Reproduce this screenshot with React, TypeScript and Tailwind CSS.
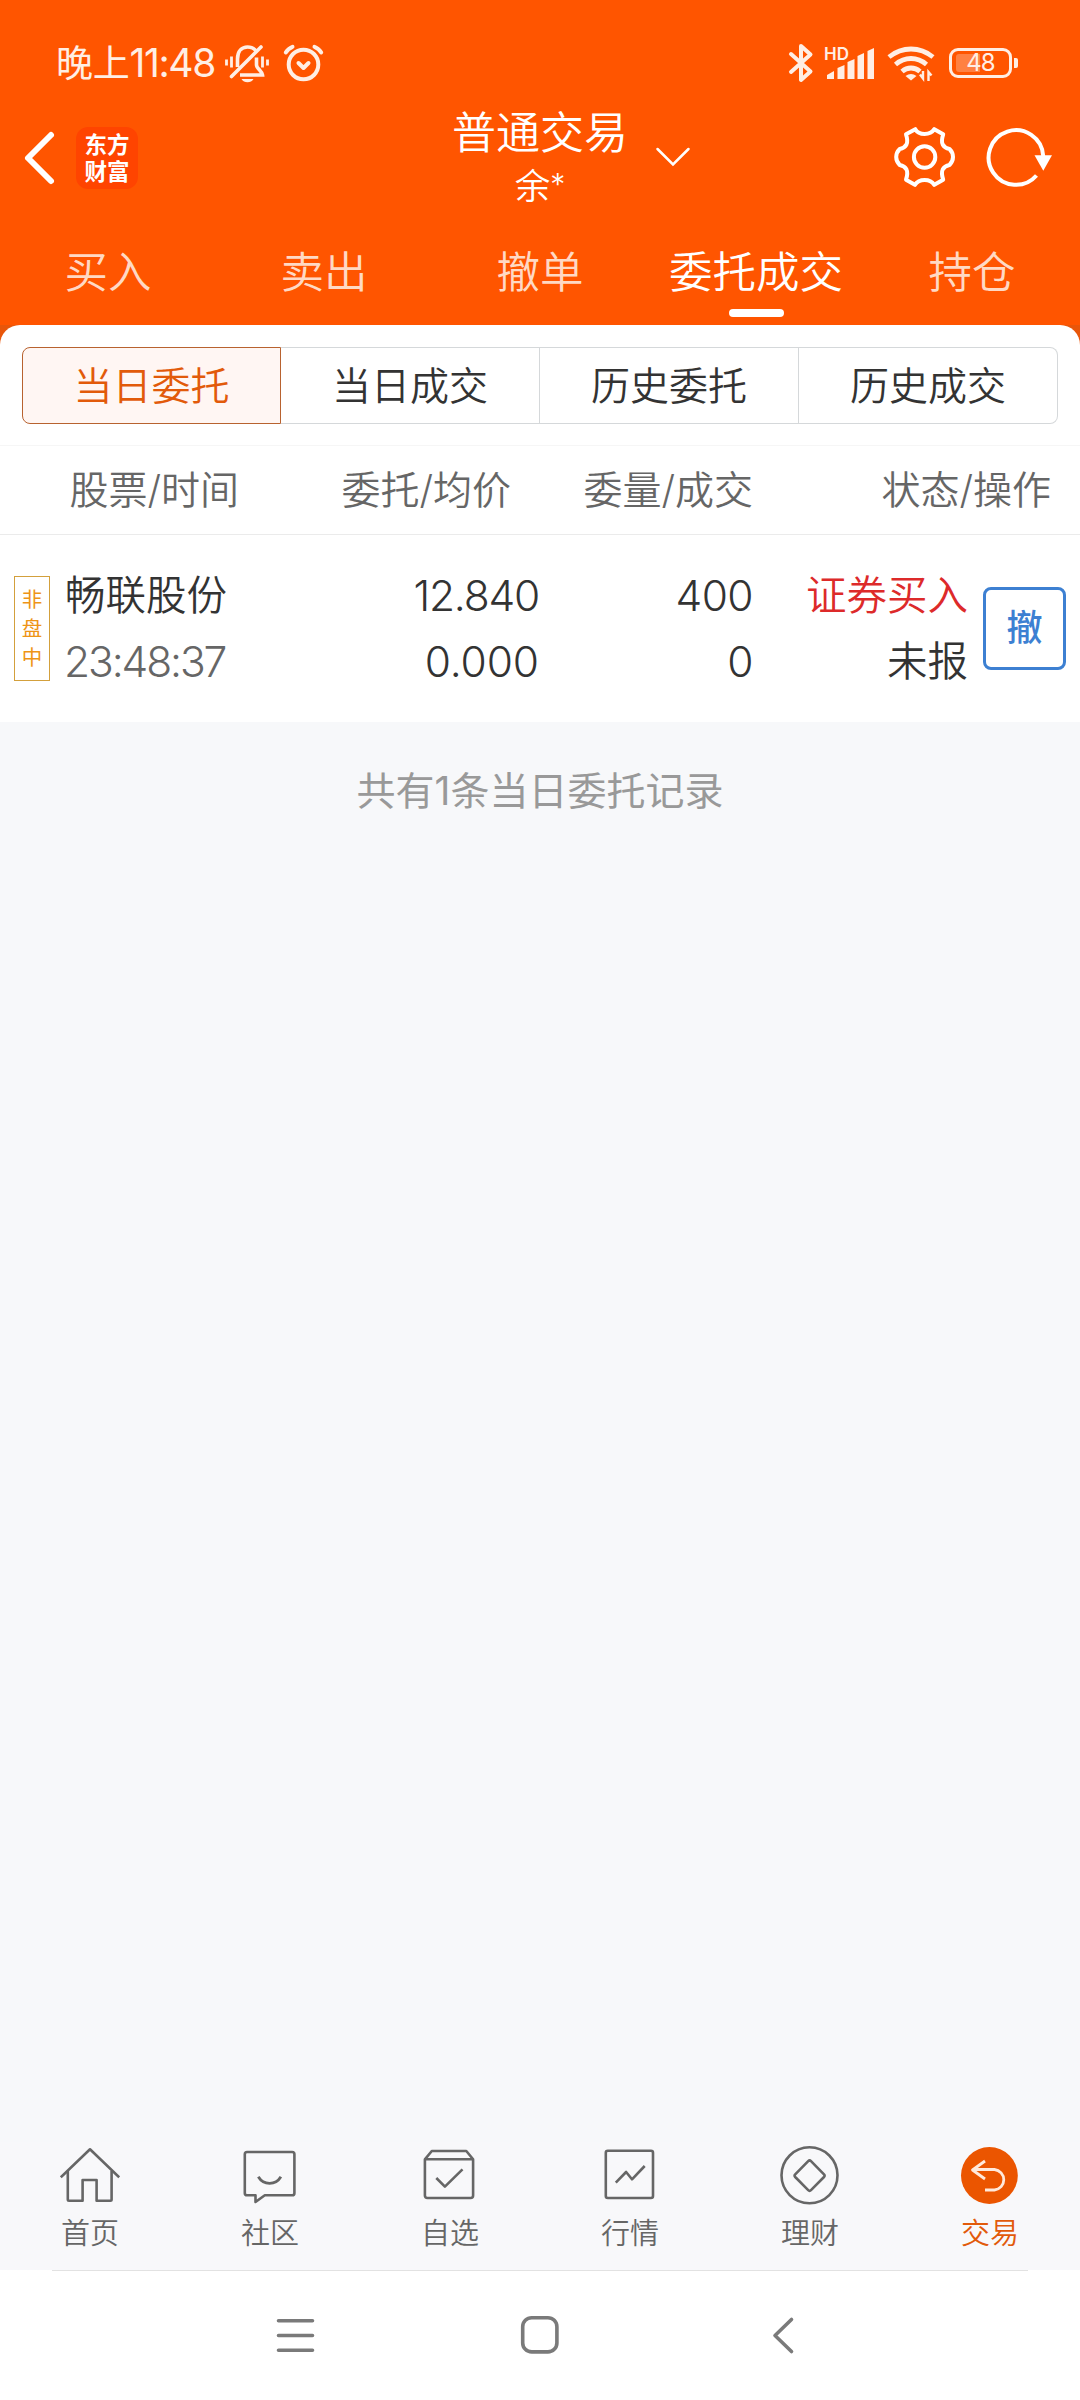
import React from 'react';

const tabs = ['买入', '卖出', '撤单', '委托成交', '持仓'];
const segments = ['当日委托', '当日成交', '历史委托', '历史成交'];

const StatusBar: React.FC = () => (
  <div className="flex h-[106px] pt-[42px] pl-[56px] text-[#ffeee4]">
    <span className="w-[169px] whitespace-nowrap text-[37px] leading-[42px] tracking-[-0.2px]">
      晚上<span className="text-[39px] tracking-[-1.4px]">11:48</span>
    </span>
    <svg className="h-[42px] w-[44px]" viewBox="0 0 44 42" fill="none" stroke="currentColor" strokeWidth="3.600">
      <path d="M6.5 34.5 36 5" strokeLinecap="round" />
      <path d="M12.5 25V17C12.5 9 17 5 22.5 5c4 0 6.500 1.200 8.500 4" />
      <path d="M31.500 15.500v7.500c0 3.500 5.500 6 6 10H15" />
      <path d="M1.500 17.500v6M6.500 14.500v11M37.500 14.500v11M42.500 17.500v6" strokeWidth="2.800" />
      <path d="M16.500 37h12q-2 3.300-6 3.300t-6-3.300z" fill="currentColor" stroke="none" />
    </svg>
    <svg className="ml-[14px] h-[42px] w-[42px]" viewBox="0 0 42 42" fill="none" stroke="currentColor" strokeWidth="4" strokeLinecap="round">
      <circle cx="20.500" cy="22.500" r="14.800" />
      <path d="M2.800 10.500Q5 6.500 9.500 4.800M38.200 10.500Q36 6.500 31.500 4.800" />
      <path d="m15.500 21 5 5 5-5" strokeLinejoin="round" />
    </svg>
    <svg className="ml-[463px] h-[42px] w-[26px]" viewBox="0 0 26 42" fill="none" stroke="currentColor" strokeWidth="4" strokeLinejoin="round" strokeLinecap="round">
      <path d="m3 12 19.500 17.500L13 38V4l9.500 8.500L3 30" />
    </svg>
    <div className="relative ml-[10px] h-[42px] w-[52px]">
      <span className="absolute top-[3px] left-0 text-[17px] leading-[18px] font-semibold">HD</span>
      <svg className="h-[42px] w-[52px]" viewBox="0 0 52 42" fill="currentColor">
        <path d="M3 37v-4l7-4v8zM13.500 37V26l7-3v14zM23.500 37V20l7-3v20zM33.500 37V14l6.500-3v26zM43.500 37V9l6.500-3v31z" />
      </svg>
    </div>
    <svg className="ml-[11px] h-[42px] w-[50px]" viewBox="0 0 50 42" fill="none" stroke="currentColor" strokeWidth="4.800">
      <path d="M2 15Q12 7 24 7t22 8" />
      <path d="M8.500 22.500Q15.500 16.500 24 16.500t15.500 6" />
      <path d="M15 29.500Q19 26 24 26t9 3.500" />
      <path d="M18.500 34q5.500-4 11 0L24 38.500z" fill="currentColor" stroke="none" />
      <path d="M33 32.500l3 4V29M44.500 33.500l-3-3.500v9" strokeWidth="2.400" />
    </svg>
    <div className="mt-[6px] ml-[12px] flex items-center self-start">
      <div className="relative flex h-[30px] w-[63px] items-center justify-center rounded-[9px] border-[3px] border-[#ffeee4]">
        <div className="absolute top-[3px] left-[4px] h-[18px] w-[24px] rounded-l-[3px] bg-[#ff8142]" />
        <span className="relative text-[24px] leading-[24px] tracking-[-1px]">48</span>
      </div>
      <div className="ml-[2px] h-[10px] w-[4px] rounded-r-[2px] bg-[#ffeee4]" />
    </div>
  </div>
);

const TitleBar: React.FC = () => (
  <div className="flex h-[108px] text-white">
    <div className="flex w-[440px] items-center pb-[4px] pl-[21px]">
      <svg className="h-[58px] w-[36px]" viewBox="0 0 36 58" fill="none" stroke="currentColor" strokeWidth="6" strokeLinecap="round" strokeLinejoin="round">
        <path d="M30 6 7 29l23 23" />
      </svg>
      <div className="ml-[19px] flex h-[62px] w-[62px] flex-col items-center justify-center rounded-[12px] bg-[#ff4400] pb-px text-[22.5px] leading-[27px] font-bold">
        <span>东方</span>
        <span>财富</span>
      </div>
    </div>
    <div className="flex w-[200px] flex-col items-center leading-[54px] font-[350]">
      <span className="text-[44px]">普通交易</span>
      <span className="text-[35.5px]">
        余<span className="align-[4px] text-[30px] leading-none">*</span>
      </span>
    </div>
    <div className="flex flex-1 items-center pb-[4px]">
      <svg className="ml-[14px] h-[22px] w-[38px]" viewBox="0 0 38 22" fill="none" stroke="currentColor" strokeWidth="2.500" strokeLinecap="round">
        <path d="m3.500 2 15.500 15.500L34.500 2" />
      </svg>
      <svg className="ml-[198px] h-[68px] w-[70px]" viewBox="0 0 70 68" fill="none" stroke="currentColor" strokeWidth="4" strokeLinejoin="round">
        <path d="M25.300 5.200Q28 10 34.600 10T44.300 5.200L53.200 10.300Q51 17 52.700 20.500 54.500 24 59.500 25 63 28.500 63 33T59.500 41Q54.500 42 52.700 45.500 51 49 53.200 55.700L44.300 60.800Q41.200 56 34.600 56T24.900 60.800L16 55.700Q18.200 49 16.500 45.500 14.700 42 9.700 41 6.200 37.500 6.200 33T9.700 25Q14.700 24 16.500 20.500 18.200 17 16 10.300Z" />
        <circle cx="34.600" cy="33" r="10.700" />
      </svg>
      <svg className="ml-[24px] h-[68px] w-[72px]" viewBox="0 0 72 68" fill="none" stroke="currentColor" strokeWidth="4">
        <path d="M52.500 51.500A27.300 27.300 0 1 1 59.200 32" />
        <path d="M50.500 31.300h17.500l-8.700 15.400z" fill="currentColor" stroke="none" />
      </svg>
    </div>
  </div>
);

const TradeTabs: React.FC = () => (
  <div className="grid h-[111px] grid-cols-5 text-[43.5px] leading-[54px] font-[350]">
    {tabs.map((tab) => {
      const active = tab === '委托成交';
      return (
        <div key={tab} className={`flex flex-col items-center pt-[31px] ${active ? 'text-white' : 'text-[#ffd9c4]'}`}>
          <span>{tab}</span>
          {active && <div className="mt-[10px] h-[8px] w-[55px] rounded-full bg-white" />}
        </div>
      );
    })}
  </div>
);

const Segments: React.FC = () => (
  <div className="mx-[22px] grid h-[77px] grid-cols-4 text-[39px] leading-[75px] font-[350] text-[#333]">
    {segments.map((label, i) => (
      <div
        key={label}
        className={
          i === 0
            ? 'rounded-l-[8px] border border-[#b8622f] bg-[#fff6f3] text-center text-[#e25a0a]'
            : `border-y border-r border-[#d5d8da] text-center ${i === 3 ? 'rounded-r-[8px]' : ''}`
        }
      >
        {label}
      </div>
    ))}
  </div>
);

const OrderTable: React.FC = () => (
  <div>
    <div className="mt-[21px] flex h-[90px] border-y border-t-[#f6f6f6] border-b-[#ebebeb] text-right text-[39px] leading-[88px] font-[350] text-[#666]">
      <span className="w-[239px]">股票/时间</span>
      <span className="w-[272px]">委托/均价</span>
      <span className="w-[242px]">委量/成交</span>
      <span className="w-[298px]">状态/操作</span>
    </div>
    <div className="flex h-[188px] pt-[28px] text-[40.5px] leading-[66px] font-[350] text-[#333]">
      <div className="mt-[13px] ml-[14px] flex h-[105px] w-[36px] flex-col items-center justify-center border-[1.500px] border-[#d3a03c] text-[20.500px] leading-[29px] font-normal text-[#ee9416]">
        <span>非</span>
        <span>盘</span>
        <span>中</span>
      </div>
      <div className="ml-[14px] flex w-[180px] flex-col">
        <span className="pl-px">畅联股份</span>
        <span className="text-[42.5px] tracking-[-2.1px] text-[#666]">23:48:37</span>
      </div>
      <div className="flex w-[295px] flex-col text-right text-[42.5px]">
        <span className="tracking-[-1.2px]">12.840</span>
        <span className="tracking-[-0.1px]">0.000</span>
      </div>
      <div className="flex w-[214px] flex-col text-right text-[42.5px] tracking-[-0.6px]">
        <span>400</span>
        <span>0</span>
      </div>
      <div className="flex w-[215px] flex-col text-right">
        <span className="text-[#dd2a2a]">证券买入</span>
        <span>未报</span>
      </div>
      <button className="mt-[24px] ml-[15px] h-[83px] w-[83px] rounded-[8px] border-[3px] border-[#3d80d2] text-[36px] leading-[77px] font-medium text-[#3d80d2]">
        撤
      </button>
    </div>
  </div>
);

const navItems = [
  {
    label: '首页',
    icon: (
      <>
        <path d="M.8 33.300 30 5.300l29.200 28" />
        <path d="M7.800 27v28.500q0 1.200 1.200 1.200h13.600V36h14v20.700h13.800q1.200 0 1.200-1.200V27" />
      </>
    ),
  },
  {
    label: '社区',
    icon: (
      <>
        <path d="M7 8h45.200q2.200 0 2.200 2.200v39q0 2.100-2.200 2.100H24.800L15.500 58v-6.700H7q-2.200 0-2.200-2.100v-39Q4.800 8 7 8z" />
        <path d="M18.300 32.700q4 6.600 11.300 6.600t11.300-6.600" strokeWidth="2.800" />
      </>
    ),
  },
  {
    label: '自选',
    icon: (
      <>
        <path d="M4.900 15.300 11.800 7h34.500l6.800 8.300V51.500q0 2.500-2.500 2.500H7.400q-2.500 0-2.500-2.500zM4.900 15.300h48.200" />
        <path d="m16.300 34 8.600 8.700 17.600-17.400" />
      </>
    ),
  },
  {
    label: '行情',
    icon: (
      <>
        <rect x="5.800" y="6.700" width="47.200" height="47.300" rx="2" />
        <path d="M15.800 38.700 26.100 28l5.900 7.300L44.700 22" />
      </>
    ),
  },
  {
    label: '理财',
    icon: (
      <>
        <circle cx="29.500" cy="31.300" r="28" />
        <path d="M28.200 17.200q1.400-1.400 2.800 0l13 13.200q1.200 1.300 0 2.600L31 46.200q-1.400 1.400-2.800 0L15.200 33q-1.200-1.300 0-2.600z" />
      </>
    ),
  },
  {
    label: '交易',
    active: true,
    icon: (
      <>
        <circle cx="29.400" cy="31.500" r="28.400" fill="#eb5500" stroke="none" />
        <path d="M25 17 12.500 26 25 35M12.500 25.500H34.500a10.300 10.300 0 0 1 0 20.500H25" stroke="#ffe9db" strokeWidth="2.800" />
      </>
    ),
  },
];

const BottomNav: React.FC = () => (
  <nav className="grid h-[128px] grid-cols-6 bg-[#f8f8fa] pt-[2px]">
    {navItems.map(({ label, icon, active }) => (
      <div key={label} className={`flex flex-col items-center text-[29px] leading-[34px] font-[350] ${active ? 'text-[#e25a0a]' : 'text-[#666]'}`}>
        <svg className="h-[62px] w-[60px]" viewBox="0 0 60 62" fill="none" stroke="currentColor" strokeWidth="2.600" strokeLinejoin="round">
          {icon}
        </svg>
        <span className="mt-[11px]">{label}</span>
      </div>
    ))}
  </nav>
);

const SystemNav: React.FC = () => (
  <div className="h-[130px] bg-white">
    <div className="mx-[52px] h-px bg-[#e2e2e2]" />
    <div className="flex items-center pt-[43px] pl-[275px] text-[#7a7a7a]">
      <svg className="h-[44px] w-[42px]" viewBox="0 0 42 44" fill="none" stroke="currentColor" strokeWidth="3.600" strokeLinecap="round">
        <path d="M3.500 6.700h34M3.500 21.500h34M3.500 36.300h34" />
      </svg>
      <svg className="ml-[202px] h-[44px] w-[42px]" viewBox="0 0 42 44" fill="none" stroke="currentColor" strokeWidth="3.600">
        <rect x="3.700" y="3.700" width="34.200" height="34.200" rx="9" />
      </svg>
      <svg className="ml-[208px] h-[44px] w-[30px]" viewBox="0 0 30 44" fill="none" stroke="currentColor" strokeWidth="3.600" strokeLinecap="round" strokeLinejoin="round">
        <path d="M22.500 5.500 6 21.500l16.500 16" />
      </svg>
    </div>
  </div>
);

const App: React.FC = () => (
  <div lang="zh-CN" className="flex h-[2400px] w-[1080px] flex-col overflow-hidden bg-[#f7f8fa] font-['Inter','Noto_Sans_CJK_SC',sans-serif]">
    <header className="bg-[#ff5500]">
      <StatusBar />
      <TitleBar />
      <TradeTabs />
    </header>
    <main className="flex-1">
      <div className="bg-[#e8560a]">
        <div className="h-[397px] rounded-t-[20px] bg-white pt-[22px]">
          <Segments />
          <OrderTable />
        </div>
      </div>
      <p className="pt-[42px] text-center text-[39px] leading-[54px] text-[#999]">共有1条当日委托记录</p>
    </main>
    <BottomNav />
    <SystemNav />
  </div>
);

export default App;
